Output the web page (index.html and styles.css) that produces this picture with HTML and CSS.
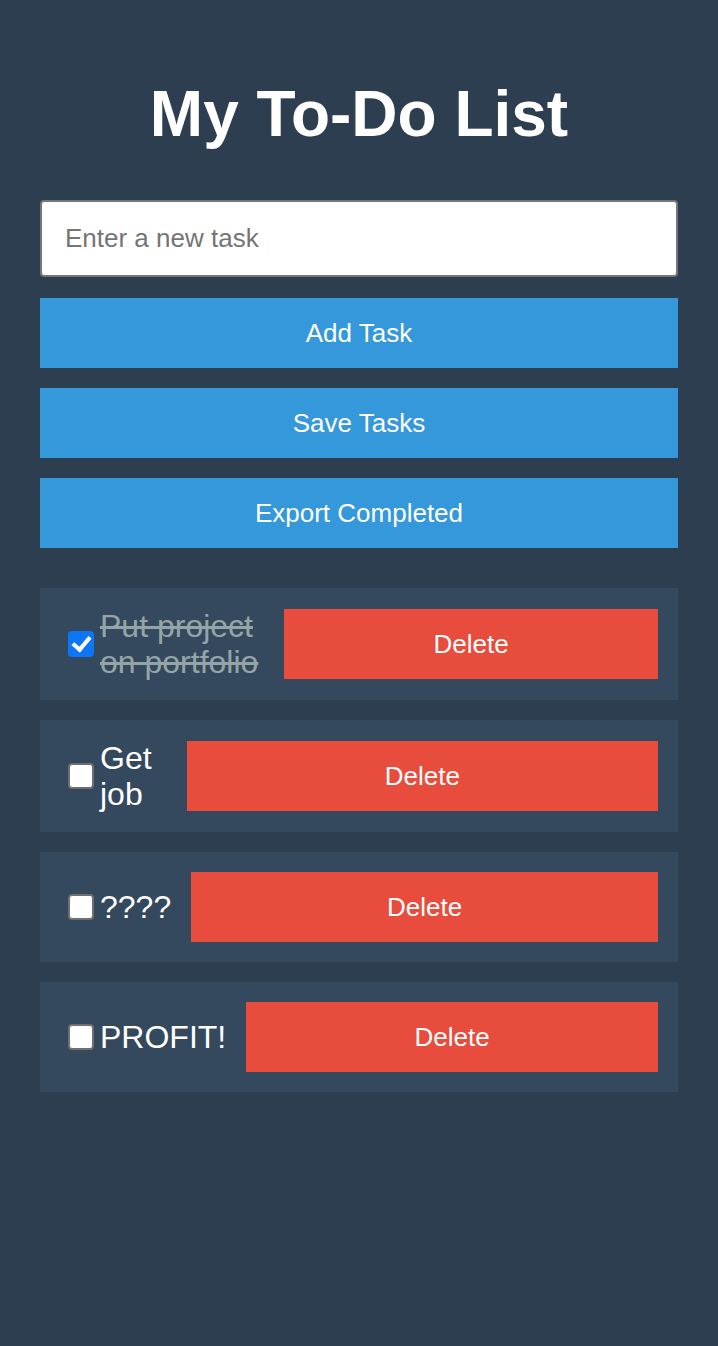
FILE: index.html
```html
<!DOCTYPE html>
<html lang="en">
<head>
<meta charset="utf-8">
<title>My To-Do List</title>
<link rel="stylesheet" href="styles.css">
</head>
<body>
<div class="app">
  <h1 class="title">My To-Do List</h1>
  <input class="task-input" type="text" placeholder="Enter a new task">
  <div class="actions">
    <button class="btn btn-primary">Add Task</button>
    <button class="btn btn-primary">Save Tasks</button>
    <button class="btn btn-primary">Export Completed</button>
  </div>
  <ul class="task-list">
    <li class="task">
      <input class="task-check" type="checkbox" checked>
      <span class="task-text done">Put project on portfolio</span>
      <button class="btn btn-delete">Delete</button>
    </li>
    <li class="task">
      <input class="task-check" type="checkbox">
      <span class="task-text">Get job</span>
      <button class="btn btn-delete">Delete</button>
    </li>
    <li class="task">
      <input class="task-check" type="checkbox">
      <span class="task-text">????</span>
      <button class="btn btn-delete">Delete</button>
    </li>
    <li class="task">
      <input class="task-check" type="checkbox">
      <span class="task-text">PROFIT!</span>
      <button class="btn btn-delete">Delete</button>
    </li>
  </ul>
</div>
</body>
</html>
```

FILE: styles.css
```css
html, body {
  margin: 0;
  padding: 0;
}

body {
  background: #2c3e50;
  font-family: "Liberation Sans", Arial, sans-serif;
  color: #ffffff;
  min-height: 1346px;
}

.app {
  padding: 40px 40px;
  display: flex;
  flex-direction: column;
}

.title {
  margin: 37px 0 49px;
  font-size: 64px;
  line-height: 74px;
  font-weight: bold;
  text-align: center;
  color: #ffffff;
}

.task-input {
  box-sizing: border-box;
  width: 100%;
  height: 77px;
  margin: 0 0 21px;
  padding: 0 23px;
  border: 2px solid #767676;
  border-radius: 4px;
  background: #ffffff;
  font-family: "Liberation Sans", Arial, sans-serif;
  font-size: 26px;
  color: #222;
  outline: none;
}

.task-input::placeholder {
  color: #757575;
}

.actions {
  display: flex;
  flex-direction: column;
  gap: 20px;
}

.btn {
  box-sizing: border-box;
  border: none;
  border-radius: 0;
  height: 70px;
  padding: 0;
  font-family: "Liberation Sans", Arial, sans-serif;
  font-size: 26px;
  color: #ffffff;
  cursor: pointer;
}

.btn-primary {
  width: 100%;
  background: #3498db;
}

.task-list {
  list-style: none;
  margin: 40px 0 0;
  padding: 0;
  display: flex;
  flex-direction: column;
  gap: 20px;
}

.task {
  display: flex;
  align-items: center;
  padding: 20px;
  background: #34495e;
}

.task-check {
  -webkit-appearance: none;
  appearance: none;
  position: relative;
  flex: none;
  box-sizing: border-box;
  width: 26px;
  height: 26px;
  margin: 0 6px 0 8px;
  border: 2px solid #6f6f6f;
  border-radius: 4px;
  background: #ffffff;
}

.task-check:checked {
  border-color: #0b76f6;
  background: #0b76f6;
}

.task-check:checked::after {
  content: "";
  position: absolute;
  left: 6px;
  top: 0px;
  width: 7px;
  height: 14px;
  border-right: 4px solid #ffffff;
  border-bottom: 4px solid #ffffff;
  transform: rotate(40deg);
}

.task-text {
  flex: 0 1 auto;
  margin-right: 20px;
  font-size: 32px;
  line-height: 36px;
  color: #ffffff;
}

.task-text.done {
  color: #95a5a6;
  text-decoration: line-through;
}

.btn-delete {
  flex: 1 1 728px;
  width: 728px;
  background: #e74c3c;
}
```
